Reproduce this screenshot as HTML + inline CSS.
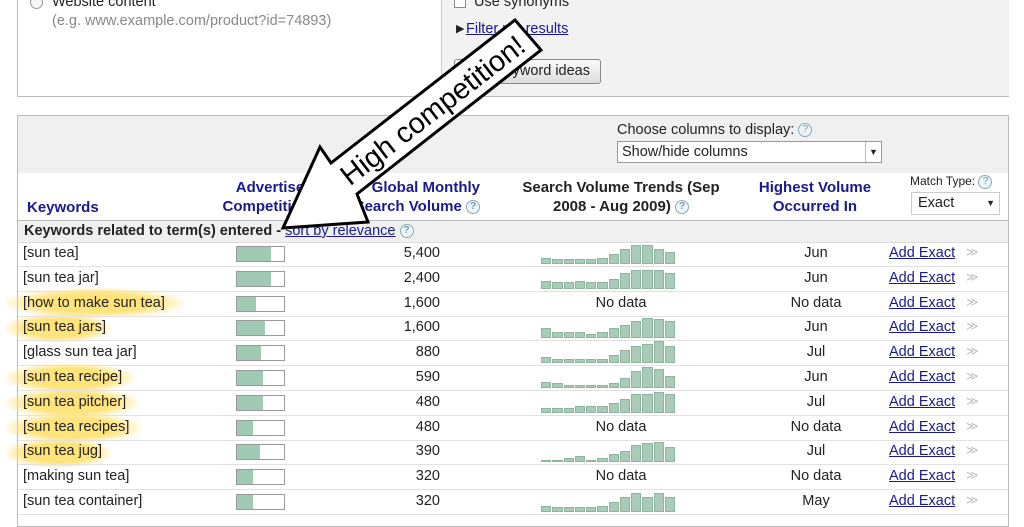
<!DOCTYPE html>
<html><head><meta charset="utf-8"><style>
body{margin:0;width:1024px;height:517px;overflow:hidden;background:#fff;font-family:"Liberation Sans",Arial,sans-serif;font-size:14.5px;color:#222;position:relative}
.a{position:absolute}
.box{position:absolute;border:1px solid #bbb}
a,.lnk{color:#1a1a8c;text-decoration:underline}
.q{display:inline-block;width:12px;height:12px;border:1px solid #8ab;border-radius:50%;font-size:10px;line-height:12px;text-align:center;color:#79a;background:#eef5fa;vertical-align:middle}
.hdr{font-weight:bold;color:#1a1a8c;text-align:center;line-height:19px;font-size:15px}
.row{position:absolute;left:18px;width:990px;height:24px;border-bottom:1px solid #e2e2e2}
.row span{position:absolute;top:3px}
.bar{position:absolute;left:218px;top:4px;width:47px;height:14px;border:1px solid #999;background:#fff}
.bar i{display:block;height:100%;background:#9fcab3}
.tr{position:absolute;left:523px;top:2px;width:134px;height:20px;display:flex;align-items:flex-end;gap:1px}
.tr b{flex:1;background:#a9ccb9;border:1px solid #8fb5a0;box-sizing:border-box}
.hl{position:absolute;left:6px;height:30px;background:radial-gradient(ellipse at center,rgba(255,222,100,.85) 45%,rgba(255,235,150,0) 75%)}
</style></head><body>
<div class="box" style="left:17px;top:-5px;width:990px;height:100px;"></div>
<div class="a" style="left:441px;top:-5px;width:567px;height:101px;background:#f2f2f2;border-left:1px solid #ccc"></div>
<div class="a" style="left:30px;top:-4px;width:11px;height:11px;border:1px solid #999;border-radius:50%;background:#f6f6f6"></div>
<div class="a" style="left:52px;top:-6px">Website content</div>
<div class="a" style="left:52px;top:13px;color:#888">(e.g. www.example.com/product?id=74893)</div>
<div class="a" style="left:454px;top:-4px;width:10px;height:10px;border:1px solid #888;background:#fff"></div>
<div class="a" style="left:474px;top:-6px">Use synonyms</div>
<div class="a" style="left:456px;top:22px;font-size:11px">▶</div>
<div class="a" style="left:466px;top:21px"><a>Filter my results</a></div>
<div class="a" style="left:454px;top:59px;width:145px;height:23px;border:1px solid #888;border-radius:3px;background:linear-gradient(#fafafa,#ddd);line-height:23px"><span style="position:absolute;right:10px">Get keyword ideas</span></div>

<div class="box" style="left:17px;top:115px;width:990px;height:410px;"></div>
<div class="a" style="left:18px;top:116px;width:990px;height:57px;background:#f0f0f0"></div>
<div class="a" style="left:617px;top:122px">Choose columns to display: <span class="q">?</span></div>
<div class="a" style="left:617px;top:141px;width:263px;height:20px;border:1px solid #999;background:#fff"><span style="position:absolute;left:4px;top:2px">Show/hide columns</span><span style="position:absolute;right:0;top:0;width:15px;height:20px;border-left:1px solid #bbb;font-size:9px;text-align:center;line-height:20px">▼</span></div>
<div class="a" style="left:18px;top:173px;width:990px;height:47px;border-bottom:2px solid #bbb"></div>
<div class="a hdr" style="left:27px;top:198px">Keywords</div>
<div class="a hdr" style="left:190px;top:178px;width:120px;text-align:right">Advertiser<br>Competition</div>
<div class="a hdr" style="left:310px;top:178px;width:170px;text-align:right">Global Monthly<br>Search Volume <span class="q">?</span></div>
<div class="a hdr" style="left:505px;top:178px;width:232px;color:#222">Search Volume Trends (Sep<br>2008 - Aug 2009) <span class="q">?</span></div>
<div class="a hdr" style="left:740px;top:178px;width:150px">Highest Volume<br>Occurred In</div>
<div class="a" style="left:910px;top:174px;font-size:12px">Match Type: <span class="q">?</span></div>
<div class="a" style="left:911px;top:192px;width:87px;height:21px;border:1px solid #ccc;background:#fff"><span style="position:absolute;left:6px;top:2px">Exact</span><span style="position:absolute;right:4px;top:5px;font-size:9px">▼</span></div>
<div class="a" style="left:18px;top:221px;width:990px;height:21px;background:#f0f0f0;border-bottom:1px solid #ddd"></div>
<div class="a" style="left:24px;top:223px;font-weight:bold">Keywords related to term(s) entered - <span class="lnk" style="font-weight:normal">sort by relevance</span> <span class="q">?</span></div>

<div class="hl" style="top:288px;width:178px"></div>
<div class="hl" style="top:313px;width:105px"></div>
<div class="hl" style="top:363px;width:128px"></div>
<div class="hl" style="top:388px;width:132px"></div>
<div class="hl" style="top:413px;width:135px"></div>
<div class="hl" style="top:438px;width:105px"></div>

<div id="rows"></div>
<script>
var d=[["sun tea",.72,"5,400",[3,2,2,2,2,3,5,8,10,10,8,6],"Jun"],
["sun tea jar",.72,"2,400",[4,3,3,4,3,3,5,8,10,10,10,8],"Jun"],
["how to make sun tea",.4,"1,600",0,"No data"],
["sun tea jars",.6,"1,600",[5,3,3,3,2,3,5,7,9,11,10,9],"Jun"],
["glass sun tea jar",.52,"880",[3,2,2,2,2,2,4,7,9,10,12,9],"Jul"],
["sun tea recipe",.55,"590",[3,2,1,1,1,1,2,5,9,11,10,6],"Jun"],
["sun tea pitcher",.55,"480",[2,2,2,3,3,3,5,7,10,10,11,10],"Jul"],
["sun tea recipes",.33,"480",0,"No data"],
["sun tea jug",.48,"390",[1,1,2,3,1,2,4,6,9,10,11,8],"Jul"],
["making sun tea",.33,"320",0,"No data"],
["sun tea container",.33,"320",[3,2,2,2,2,3,5,8,10,8,10,8],"May"]];
var h="";d.forEach(function(r,i){var t=242+i*24.8;h+='<div class="row" style="top:'+t+'px"><span style="left:5px">['+r[0]+']</span><div class="bar"><i style="width:'+(r[1]*100)+'%"></i></div><span style="left:322px;width:100px;text-align:right">'+r[2]+'</span>';
if(r[3]){h+='<div class="tr">';r[3].forEach(function(v){h+='<b style="height:'+(v*1.8+1)+'px"></b>'});h+='</div>'}else h+='<span style="left:523px;width:160px;text-align:center">No data</span>';
h+='<span style="left:742px;width:112px;text-align:center">'+r[4]+'</span><span class="lnk" style="left:871px">Add Exact</span><span style="left:948px;color:#bbb;font-size:12px">≫</span></div>'});
document.getElementById("rows").innerHTML=h;
</script>

<svg class="a" style="left:0;top:0" width="1024" height="517">
<polygon points="283,228 320,147 331,163 515,20 541,50 357,194 368,222" fill="#fff" stroke="#000" stroke-width="3" stroke-linejoin="miter"/>
<text x="0" y="0" transform="translate(434,112) rotate(-37.7)" text-anchor="middle" font-family="Liberation Sans,Arial,sans-serif" font-size="29" fill="#000" dominant-baseline="middle">High competition!</text>
</svg>
</body></html>
